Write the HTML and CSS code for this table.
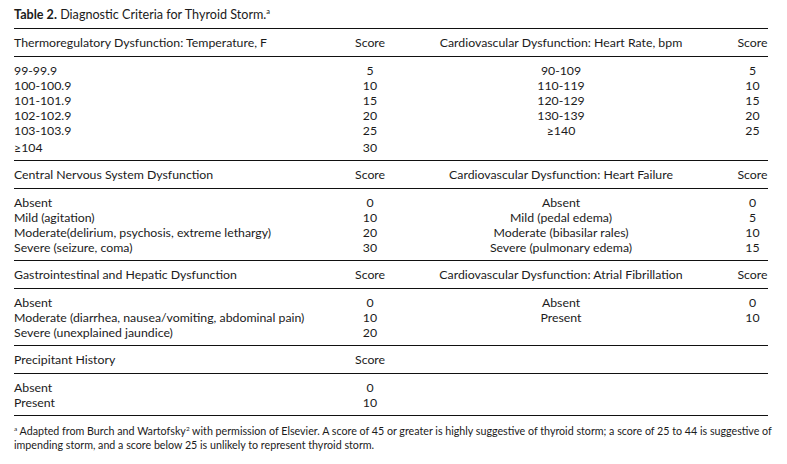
FILE: index.html
```html
<!DOCTYPE html>
<html lang="en">
<head>
<meta charset="utf-8">
<title>Table 2. Diagnostic Criteria for Thyroid Storm</title>
<link rel="stylesheet" href="styles.css">
</head>
<body>
<div class="page">
  <p class="caption"><b>Table 2.</b> Diagnostic Criteria for Thyroid Storm.<sup>a</sup></p>
  <div class="table">
    <section class="sec">
      <div class="head">
        <div class="lab">Thermoregulatory Dysfunction: Temperature, F</div>
        <div class="sc">Score</div>
        <div class="lab mid">Cardiovascular Dysfunction: Heart Rate, bpm</div>
        <div class="sc">Score</div>
      </div>
      <div class="body">
        <div class="lab"><div>99-99.9</div><div>100-100.9</div><div>101-101.9</div><div>102-102.9</div><div>103-103.9</div><div class="tall">&ge;104</div></div>
        <div class="sc"><div>5</div><div>10</div><div>15</div><div>20</div><div>25</div><div class="tall">30</div></div>
        <div class="lab mid"><div>90-109</div><div>110-119</div><div>120-129</div><div>130-139</div><div>&ge;140</div></div>
        <div class="sc"><div>5</div><div>10</div><div>15</div><div>20</div><div>25</div></div>
      </div>
    </section>
    <section class="sec">
      <div class="head">
        <div class="lab">Central Nervous System Dysfunction</div>
        <div class="sc">Score</div>
        <div class="lab mid">Cardiovascular Dysfunction: Heart Failure</div>
        <div class="sc">Score</div>
      </div>
      <div class="body">
        <div class="lab"><div>Absent</div><div>Mild (agitation)</div><div>Moderate(delirium, psychosis, extreme lethargy)</div><div>Severe (seizure, coma)</div></div>
        <div class="sc"><div>0</div><div>10</div><div>20</div><div>30</div></div>
        <div class="lab mid"><div>Absent</div><div>Mild (pedal edema)</div><div>Moderate (bibasilar rales)</div><div>Severe (pulmonary edema)</div></div>
        <div class="sc"><div>0</div><div>5</div><div>10</div><div>15</div></div>
      </div>
    </section>
    <section class="sec">
      <div class="head">
        <div class="lab">Gastrointestinal and Hepatic Dysfunction</div>
        <div class="sc">Score</div>
        <div class="lab mid">Cardiovascular Dysfunction: Atrial Fibrillation</div>
        <div class="sc">Score</div>
      </div>
      <div class="body">
        <div class="lab"><div>Absent</div><div>Moderate (diarrhea, nausea/vomiting, abdominal pain)</div><div>Severe (unexplained jaundice)</div></div>
        <div class="sc"><div>0</div><div>10</div><div>20</div></div>
        <div class="lab mid"><div>Absent</div><div>Present</div></div>
        <div class="sc"><div>0</div><div>10</div></div>
      </div>
    </section>
    <section class="sec">
      <div class="head">
        <div class="lab">Precipitant History</div>
        <div class="sc">Score</div>
        <div class="lab mid"></div>
        <div class="sc"></div>
      </div>
      <div class="body">
        <div class="lab"><div>Absent</div><div>Present</div></div>
        <div class="sc"><div>0</div><div>10</div></div>
        <div class="lab mid"></div>
        <div class="sc"></div>
      </div>
    </section>
  </div>
  <p class="note"><sup>a</sup> Adapted from Burch and Wartofsky<sup>2</sup> with permission of Elsevier. A score of 45 or greater is highly suggestive of thyroid storm; a score of 25 to 44 is suggestive of<br>impending storm, and a score below 25 is unlikely to represent thyroid storm.</p>
</div>
</body>
</html>
```

FILE: styles.css
```css
* { box-sizing: border-box; }

html, body {
  margin: 0;
  padding: 0;
  background: #ffffff;
}

body {
  font-family: Lato, "Noto Sans", "Liberation Sans", sans-serif;
  color: #1b1b1b;
}

.page {
  padding: 7px 0 0 14px;
  width: 787px;
}

.caption {
  margin: 0 0 5px;
  font-size: 12.6px;
  line-height: 16px;
}

.caption b {
  font-weight: 700;
}

.caption sup,
.note sup {
  font-size: 0.6em;
  line-height: 0;
  vertical-align: 0.6em;
}

.table {
  width: 754px;
  font-size: 12.3px;
  border-bottom: 1px solid #111;
}

.sec {
  border-top: 1px solid #111;
}

.head,
.body {
  display: grid;
  grid-template-columns: 341px 30px 352px 31px;
}

.head {
  height: 28px;
  align-items: center;
  border-bottom: 1px solid #111;
  line-height: 15px;
}

.body {
  padding: 6px 0 5px;
  line-height: 15px;
}

.body .tall {
  height: 17px;
  line-height: 19px;
}

.lab {
  white-space: nowrap;
}

.mid {
  text-align: center;
}

.sc {
  text-align: center;
  white-space: nowrap;
}

.note {
  margin: 0;
  padding-top: 8px;
  font-size: 10.7px;
  line-height: 14px;
  white-space: nowrap;
}
```
